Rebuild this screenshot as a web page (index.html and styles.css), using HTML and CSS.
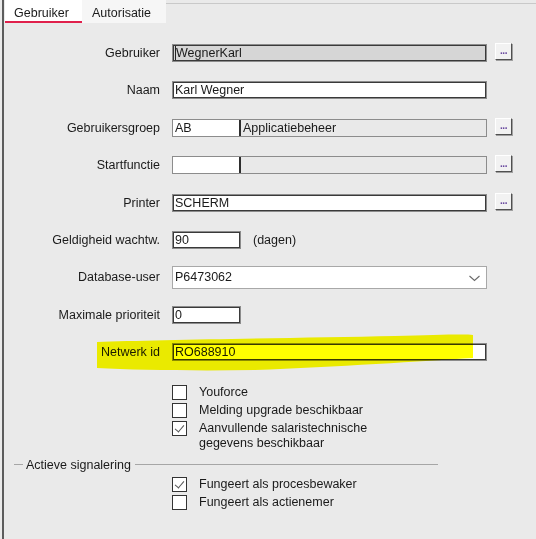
FILE: index.html
```html
<!DOCTYPE html>
<html lang="nl">
<head>
<meta charset="utf-8">
<title>Gebruiker</title>
<link rel="stylesheet" href="styles.css">
</head>
<body>
<div class="window">
  <div class="tabs">
    <div class="tab active">Gebruiker</div>
    <div class="tab">Autorisatie</div>
    <div class="tab-fill"></div>
  </div>

  <div class="form">
    <div class="row">
      <label class="lbl">Gebruiker</label>
      <div class="field">
        <div class="input wide readonly"><span class="caret"></span>WegnerKarl</div>
        <button class="dots">...</button>
      </div>
    </div>
    <div class="row">
      <label class="lbl">Naam</label>
      <div class="field"><div class="input wide">Karl Wegner</div></div>
    </div>
    <div class="row">
      <label class="lbl">Gebruikersgroep</label>
      <div class="field">
        <div class="input wide split">
          <span class="code">AB</span><span class="desc">Applicatiebeheer</span>
        </div>
        <button class="dots">...</button>
      </div>
    </div>
    <div class="row">
      <label class="lbl">Startfunctie</label>
      <div class="field">
        <div class="input wide split">
          <span class="code"></span><span class="desc"></span>
        </div>
        <button class="dots">...</button>
      </div>
    </div>
    <div class="row">
      <label class="lbl">Printer</label>
      <div class="field">
        <div class="input wide">SCHERM</div>
        <button class="dots">...</button>
      </div>
    </div>
    <div class="row">
      <label class="lbl">Geldigheid wachtw.</label>
      <div class="field">
        <div class="input short">90</div>
        <span class="unit">(dagen)</span>
      </div>
    </div>
    <div class="row">
      <label class="lbl">Database-user</label>
      <div class="field">
        <div class="combo">
          <span>P6473062</span>
          <svg class="chev" width="11" height="7" viewBox="0 0 11 7"><path d="M0.5 1 L5.5 5.5 L10.5 1" fill="none" stroke="#6a6a6a" stroke-width="1.1"/></svg>
        </div>
      </div>
    </div>
    <div class="row">
      <label class="lbl">Maximale prioriteit</label>
      <div class="field"><div class="input short">0</div></div>
    </div>
    <div class="row">
      <label class="lbl">Netwerk id</label>
      <div class="field"><div class="input wide">RO688910</div></div>
    </div>
  </div>

  <div class="checks">
    <div class="check"><span class="box"></span><span class="ctext">Youforce</span></div>
    <div class="check"><span class="box"></span><span class="ctext">Melding upgrade beschikbaar</span></div>
    <div class="check"><span class="box checked"></span><span class="ctext">Aanvullende salaristechnische<br>gegevens beschikbaar</span></div>
  </div>

  <div class="group">
    <span class="gline short-line"></span>
    <span class="gtitle">Actieve signalering</span>
    <span class="gline long-line"></span>
  </div>

  <div class="checks checks2">
    <div class="check"><span class="box checked"></span><span class="ctext">Fungeert als procesbewaker</span></div>
    <div class="check"><span class="box"></span><span class="ctext">Fungeert als actienemer</span></div>
  </div>

  <svg class="marker" width="400" height="42" viewBox="0 0 400 42">
    <path d="M2 8 C60 6 200 4 300 2 C340 1 370 0 378 1 L378 24 C330 27 240 33 160 36 C100 37 40 36 2 34 Z" fill="#ffff00"/>
  </svg>
</div>
</body>
</html>
```

FILE: styles.css
```css
html, body {
  margin: 0;
  padding: 0;
}
body {
  background: #eaeaea;
  font-family: "Liberation Sans", Arial, sans-serif;
  font-size: 12.5px;
  color: #1a1a1a;
}
.window {
  position: relative;
  margin-left: 2px;
  border-left: 2px solid #5c5c5c;
  height: 539px;
  box-sizing: border-box;
}
.tabs {
  display: flex;
  height: 24px;
  padding-left: 1px;
}
.tab {
  height: 23px;
  line-height: 16px;
  padding: 5px 10px 0;
  background: #f6f6f6;
  box-sizing: border-box;
}
.tab.active {
  background: #ffffff;
  width: 77px;
  border-bottom: 2px solid #e0204c;
  padding: 5px 9px 0;
}
.tab:nth-child(2) {
  width: 84px;
}
.tab-fill {
  flex: 1;
  margin-top: 3px;
  border-top: 1px solid #c9c9c9;
}
.form {
  display: grid;
  grid-template-columns: 156px 1fr;
  grid-auto-rows: 37.4px;
  column-gap: 12px;
  padding-top: 10.3px;
}
.row {
  display: contents;
}
.lbl {
  text-align: right;
  align-self: center;
}
.field {
  display: flex;
  align-items: center;
  gap: 8px;
}
.input {
  height: 18px;
  box-sizing: border-box;
  border: 1px solid #8c8c8c;
  box-shadow: inset 0 0 0 1px #3a3a3a;
  background: #fff;
  padding: 0 2px;
  line-height: 16px;
  white-space: nowrap;
  position: relative;
  display: flex;
  align-items: center;
}
.input.wide {
  width: 315px;
}
.input.short {
  width: 69px;
}
.input.readonly {
  background: #d6d6d6;
}
.caret {
  display: inline-block;
  width: 1px;
  height: 14px;
  background: #222;
}
.input.split {
  padding: 0;
}
.split .code {
  width: 68px;
  height: 100%;
  background: #fff;
  border-right: 2px solid #2e2e2e;
  padding-left: 2px;
  box-sizing: border-box;
  line-height: 16px;
}
.split .desc {
  flex: 1;
  height: 100%;
  background: #e9e9e9;
  padding-left: 2px;
  line-height: 16px;
}
.dots {
  width: 17px;
  height: 17px;
  padding: 0;
  margin: 0 0 3px 0;
  box-sizing: border-box;
  background: #f2f2f2;
  border: 1px solid;
  border-color: #ffffff #505050 #505050 #ffffff;
  box-shadow: 1px 1px 0 #a0a0a0;
  font-family: "Liberation Sans", Arial, sans-serif;
  font-size: 10px;
  font-weight: bold;
  color: #6a4aa0;
  line-height: 14px;
  letter-spacing: -0.5px;
}
.unit {
  margin-left: 4px;
}
.combo {
  width: 315px;
  height: 23px;
  box-sizing: border-box;
  border: 1px solid #a8a8a8;
  background: #fff;
  display: flex;
  align-items: center;
  justify-content: space-between;
  padding: 0 6px 0 2px;
}
.chev {
  margin-top: 3px;
}
.checks {
  margin-top: 13px;
  padding-left: 168px;
  display: flex;
  flex-direction: column;
}
.check {
  display: flex;
  align-items: flex-start;
  min-height: 18px;
}
.box {
  width: 15px;
  height: 15px;
  box-sizing: border-box;
  border: 1px solid #333;
  background: #fff;
  margin-top: 1px;
  flex: none;
  position: relative;
}
.box.checked::after {
  content: "";
  position: absolute;
  left: 4px;
  top: 1px;
  width: 4px;
  height: 8px;
  border: solid #555;
  border-width: 0 1.5px 1.5px 0;
  transform: rotate(40deg);
}
.ctext {
  margin-left: 12px;
  line-height: 15px;
  padding-top: 1px;
}
.group {
  display: flex;
  align-items: center;
  margin-top: 7px;
  padding-left: 10px;
  width: 424px;
}
.gline {
  height: 1px;
  background: #a6a6a6;
}
.short-line {
  width: 9px;
}
.gtitle {
  padding: 0 4px 0 3px;
}
.long-line {
  flex: 1;
}
.checks2 {
  margin-top: 4px;
}
.marker {
  position: absolute;
  left: 91px;
  top: 334px;
  mix-blend-mode: multiply;
  pointer-events: none;
}
```
